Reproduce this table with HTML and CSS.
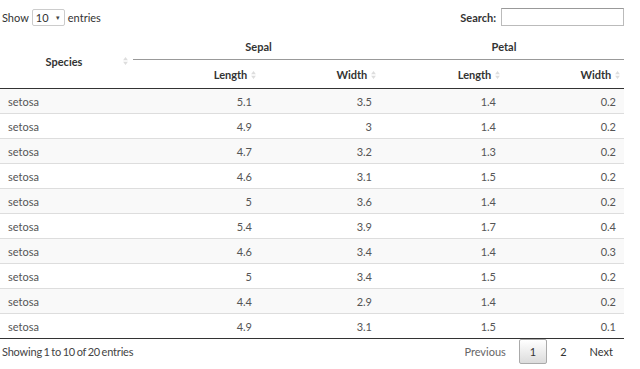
FILE: index.html
```html
<!DOCTYPE html>
<html lang="en">

<head>
    <meta charset="UTF-8">
    <meta name="viewport" content="width=device-width, initial-scale=1.0">
    <title>iris</title>
    <link rel="stylesheet" href="styles.css">
</head>

<body>
    <div class="wrapper">
        <div class="controls">
            <label class="length">Show
                <span class="select">10 <span class="caret">&#9662;</span></span>
                entries</label>
            <label class="search">Search: <span class="search-box"></span></label>
        </div>

        <table class="data">
            <colgroup>
                <col class="c-species">
                <col class="c-sl">
                <col class="c-sw">
                <col class="c-pl">
                <col class="c-pw">
            </colgroup>
            <thead>
                <tr class="group-row">
                    <th rowspan="2" class="species-head">
                        <div class="species-inner"><span></span><span>Species</span><svg class="sort" viewBox="0 0 6 10"><path d="M3 0L6 4H0Z M3 10L0 6H6Z"/></svg></div>
                    </th>
                    <th colspan="2" class="group">Sepal</th>
                    <th colspan="2" class="group">Petal</th>
                </tr>
                <tr class="sub-row">
                    <th>Length <svg class="sort" viewBox="0 0 6 10"><path d="M3 0L6 4H0Z M3 10L0 6H6Z"/></svg></th>
                    <th>Width <svg class="sort" viewBox="0 0 6 10"><path d="M3 0L6 4H0Z M3 10L0 6H6Z"/></svg></th>
                    <th>Length <svg class="sort" viewBox="0 0 6 10"><path d="M3 0L6 4H0Z M3 10L0 6H6Z"/></svg></th>
                    <th>Width <svg class="sort" viewBox="0 0 6 10"><path d="M3 0L6 4H0Z M3 10L0 6H6Z"/></svg></th>
                </tr>
            </thead>
            <tbody id="rows">
                <tr><td>setosa</td><td>5.1</td><td>3.5</td><td>1.4</td><td>0.2</td></tr>
                <tr><td>setosa</td><td>4.9</td><td>3</td><td>1.4</td><td>0.2</td></tr>
                <tr><td>setosa</td><td>4.7</td><td>3.2</td><td>1.3</td><td>0.2</td></tr>
                <tr><td>setosa</td><td>4.6</td><td>3.1</td><td>1.5</td><td>0.2</td></tr>
                <tr><td>setosa</td><td>5</td><td>3.6</td><td>1.4</td><td>0.2</td></tr>
                <tr><td>setosa</td><td>5.4</td><td>3.9</td><td>1.7</td><td>0.4</td></tr>
                <tr><td>setosa</td><td>4.6</td><td>3.4</td><td>1.4</td><td>0.3</td></tr>
                <tr><td>setosa</td><td>5</td><td>3.4</td><td>1.5</td><td>0.2</td></tr>
                <tr><td>setosa</td><td>4.4</td><td>2.9</td><td>1.4</td><td>0.2</td></tr>
                <tr><td>setosa</td><td>4.9</td><td>3.1</td><td>1.5</td><td>0.1</td></tr>
            </tbody>
        </table>

        <div class="footer">
            <div class="info">Showing 1 to 10 of 20 entries</div>
            <div class="paginate">
                <span class="page disabled">Previous</span>
                <span class="page current">1</span>
                <span class="page">2</span>
                <span class="page">Next</span>
            </div>
        </div>
    </div>
</body>

</html>
```

FILE: styles.css
```css
body {
    font-family: 'Lato', 'Liberation Sans', sans-serif;
    font-size: 11px;
    color: #333;
    margin: 0;
    padding: 0;
    background: #fff;
}

.wrapper {
    width: 624px;
}

.controls {
    display: flex;
    justify-content: space-between;
    align-items: center;
    height: 34px;
    padding: 0 0 0 2px;
    box-sizing: border-box;
}

.length {
    display: flex;
    align-items: center;
    gap: 3px;
}

.select {
    display: inline-flex;
    align-items: center;
    justify-content: space-between;
    width: 33px;
    height: 17px;
    box-sizing: border-box;
    padding: 0 4px 0 3px;
    border: 1px solid #ccc;
    border-radius: 2px;
    background: #fff;
    font-size: 11px;
}

.caret {
    font-size: 7px;
    color: #444;
}

.search {
    display: flex;
    align-items: center;
    gap: 5px;
    font-weight: bold;
}

.search-box {
    display: block;
    width: 123px;
    height: 18px;
    box-sizing: border-box;
    border: 1px solid #bbb;
    border-top-color: #999;
    background: #fff;
}

.data {
    width: 624px;
    border-collapse: collapse;
    table-layout: fixed;
}

.c-species { width: 133px; }
.c-sl { width: 127px; }
.c-sw { width: 120px; }
.c-pl { width: 124px; }
.c-pw { width: 120px; }

th {
    font-weight: bold;
    color: #333;
    padding: 0 4px 0 8px;
    text-align: right;
}

.group-row th {
    height: 25px;
}

.group {
    text-align: center;
    border-bottom: 1px solid #999;
}

.sub-row th {
    height: 28px;
    border-bottom: 1px solid #333;
}

.species-head {
    padding: 0 5px 0 0;
    border-bottom: 1px solid #333;
}

.species-inner {
    display: grid;
    grid-template-columns: 1fr auto 1fr;
    align-items: center;
}

.species-inner .sort {
    justify-self: end;
}

.sort {
    width: 5px;
    height: 8px;
    fill: #ddd;
    margin-left: 1px;
}

td {
    height: 24px;
    padding: 0 8px;
    color: #555;
    text-align: right;
    border-top: 1px solid #ddd;
}

td:first-child {
    text-align: left;
}

tbody tr:first-child td {
    border-top: none;
}

tbody tr:nth-child(odd) {
    background: #f9f9f9;
}

tbody tr:last-child td {
    border-bottom: 1px solid #333;
}

.footer {
    display: flex;
    justify-content: space-between;
    align-items: center;
    padding: 0 0 0 2px;
}

.info {
    color: #444;
    word-spacing: -1px;
    letter-spacing: -0.2px;
}

.paginate {
    display: flex;
    align-items: center;
    padding-right: 1px;
}

.page {
    padding: 5px 9px;
    margin-left: 3px;
    border: 1px solid transparent;
    border-radius: 2px;
    color: #333;
}

.page.disabled {
    color: #666;
}

.page.current {
    padding: 5px 10px;
    border-color: #aaa;
    background: linear-gradient(to bottom, #fff 0%, #dcdcdc 100%);
}
```
